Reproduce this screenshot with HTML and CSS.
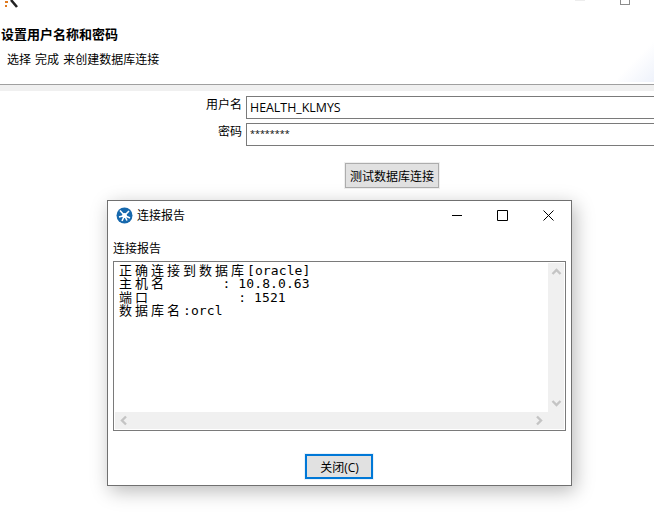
FILE: index.html
```html
<!DOCTYPE html>
<html lang="zh-CN">
<head>
    <meta charset="UTF-8">
    <meta name="viewport" content="width=device-width, initial-scale=1.0">
    <title>设置用户名称和密码</title>
    <link rel="stylesheet" href="styles.css">
</head>
<body>
    <!-- Top of the wizard window, cut off by the screenshot -->
    <svg class="tool-icon" width="20" height="10" viewBox="0 0 20 10">
        <path d="M11 0l6 7" stroke="#222" stroke-width="2.6" fill="none"/>
        <path d="M5 1h3v2H5zM5 5h2v2H5z" fill="#e07a20"/>
    </svg>
    <span class="cut-tab"></span>
    <span class="cut-box"></span>

    <div class="header">
        <div class="header-shade"></div>
        <h1>设置用户名称和密码</h1>
        <p>选择 完成 来创建数据库连接</p>
    </div>
    <div class="rule"></div>

    <div class="form">
        <label for="user">用户名</label>
        <input id="user" type="text" value="HEALTH_KLMYS">
        <label for="pass">密码</label>
        <div id="pass" class="pass-field">********</div>
    </div>

    <div class="test-row">
        <button class="btn">测试数据库连接</button>
    </div>

    <!-- Report dialog -->
    <div class="dialog">
        <div class="titlebar">
            <svg class="app-icon" width="17" height="17" viewBox="0 0 17 17">
                <circle cx="8.5" cy="8.5" r="8" fill="#1668ad"/>
                <path d="M8.5 8.5L4 3.500M8.500 8.500L13 4M8.500 8.500L3 10M8.500 8.500L14 11M8.500 8.500L6 14M8.500 8.500L11 13.500" stroke="#fff" stroke-width="1.6"/>
                <circle cx="8.5" cy="8.5" r="2.4" fill="#fff"/>
            </svg>
            <span class="title">连接报告</span>
            <svg class="win-btn" width="10" height="10" viewBox="0 0 10 10"><path d="M0 5.500h10" stroke="#000"/></svg>
            <svg class="win-btn" width="11" height="11" viewBox="0 0 11 11"><path d="M.5.5h10v10H.5z" stroke="#000" fill="none"/></svg>
            <svg class="win-btn" width="11" height="11" viewBox="0 0 11 11"><path d="M.5.5l10 10M10.500.5l-10 10" stroke="#000" fill="none"/></svg>
        </div>
        <div class="dialog-body">
            <div class="report-label">连接报告</div>
            <div class="report-box">
                <div class="report-text">
                    <div class="report-line"><span class="han">正确连接到数据库</span>[oracle]</div>
                    <div class="report-line"><span class="han">主机名</span>       : 10.8.0.63</div>
                    <div class="report-line"><span class="han">端口</span>           : 1521</div>
                    <div class="report-line"><span class="han">数据库名</span>:orcl</div>
                </div>
                <div class="vbar">
                    <svg width="11" height="8" viewBox="0 0 11 8"><path d="M1.500 6L5.500 2l4 4" stroke="#c4c4c4" stroke-width="2.400" fill="none"/></svg>
                    <svg width="11" height="8" viewBox="0 0 11 8"><path d="M1.500 2l4 4 4-4" stroke="#c4c4c4" stroke-width="2.400" fill="none"/></svg>
                </div>
                <div class="hbar">
                    <svg width="8" height="11" viewBox="0 0 8 11"><path d="M6 1.500l-4 4 4 4" stroke="#c4c4c4" stroke-width="2.400" fill="none"/></svg>
                    <svg width="8" height="11" viewBox="0 0 8 11"><path d="M2 1.500l4 4-4 4" stroke="#c4c4c4" stroke-width="2.400" fill="none"/></svg>
                </div>
                <div class="corner"></div>
            </div>
            <div class="dialog-foot">
                <button class="btn btn-close">关闭(C)</button>
            </div>
        </div>
    </div>
</body>
</html>
```

FILE: styles.css
```css
body {
    font-family: "Open Sans", "Noto Sans CJK SC", sans-serif;
    font-size: 12px;
    color: #000;
    background-color: #fff;
    margin: 0;
    height: 514px;
    overflow: hidden;
    position: relative;
}

.tool-icon {
    position: absolute;
    left: 0;
    top: 0;
}

.cut-tab {
    position: absolute;
    left: 575px;
    top: 0;
    width: 10px;
    height: 1px;
    background-color: #ededed;
}

.cut-box {
    position: absolute;
    left: 620px;
    top: -6px;
    width: 8px;
    height: 9px;
    border: 1px solid #8c8c8c;
}

.header {
    height: 84px;
    position: relative;
    overflow: hidden;
}

.header-shade {
    position: absolute;
    right: 0;
    bottom: 2px;
    width: 36px;
    height: 44px;
    background: linear-gradient(135deg, #fff 48%, #eef2fb 100%);
}

h1 {
    margin: 0;
    padding: 26px 0 0 1px;
    font-size: 13px;
    line-height: 16px;
    font-weight: bold;
    font-family: "Noto Sans CJK SC", sans-serif;
}

.header p {
    margin: 0;
    padding: 10px 0 0 7px;
    line-height: 16px;
    word-spacing: 1px;
}

.rule {
    height: 6px;
    background-color: #f0f0f0;
    border-top: 1px solid #a0a0a0;
}

.form {
    display: grid;
    grid-template-columns: 242px 1fr;
    grid-template-rows: 23px 23px;
    row-gap: 4px;
    column-gap: 4px;
    margin: 5px -4px 0 0;
}

.form label {
    text-align: right;
    line-height: 18px;
}

#user {
    box-sizing: border-box;
    width: 100%;
    height: 23px;
    border: 1px solid #7a7a7a;
    padding: 0 3px;
    margin: 0;
    font: inherit;
    font-size: 12.4px;
    color: #000;
    outline: none;
}

.pass-field {
    box-sizing: border-box;
    height: 23px;
    border: 1px solid #7a7a7a;
    padding: 0 3px;
    font-size: 9px;
    line-height: 19px;
}

.test-row {
    padding: 17px 0 0 345px;
}

.btn {
    font: inherit;
    color: #000;
    background-color: #e1e1e1;
    border: 1px solid #adadad;
    outline: 1px solid #efefef;
    padding: 0;
    width: 94px;
    height: 25px;
    box-sizing: border-box;
}

.dialog {
    position: absolute;
    left: 107px;
    top: 200px;
    width: 463px;
    height: 284px;
    border: 1px solid #707070;
    background-color: #fff;
    box-shadow: 3px 5px 18px rgba(0, 0, 0, 0.28);
    display: flex;
    flex-direction: column;
}

.titlebar {
    display: flex;
    align-items: center;
    height: 30px;
    padding: 0 17px 0 8px;
}

.app-icon {
    margin: 0 4px 2px 0;
}

.title {
    flex: 1;
    line-height: 30px;
}

.win-btn {
    margin: 0 0 2px 35px;
}

.dialog-body {
    flex: 1;
    padding: 0 5px;
    display: flex;
    flex-direction: column;
}

.report-label {
    line-height: 16px;
    padding-top: 10px;
    margin-bottom: 4px;
}

.report-box {
    box-sizing: border-box;
    height: 170px;
    border: 1px solid #7a7a7a;
    padding: 1px;
    display: grid;
    grid-template-columns: 1fr 16px;
    grid-template-rows: 1fr 17px;
}

.report-text {
    padding: 0 0 0 4px;
    font-family: "DejaVu Sans Mono", "Noto Sans CJK SC", monospace;
    font-size: 13px;
    letter-spacing: 0.1px;
}

.report-line {
    height: 13.33px;
    line-height: 13.33px;
    white-space: pre;
}

.han {
    font-family: "Noto Sans CJK SC", sans-serif;
    letter-spacing: 3px;
}

.vbar {
    background-color: #f0f0f0;
    display: flex;
    flex-direction: column;
    justify-content: space-between;
    align-items: center;
    padding: 5px 0;
}

.hbar {
    background-color: #f0f0f0;
    display: flex;
    justify-content: space-between;
    align-items: center;
    padding: 0 5px;
}

.corner {
    background-color: #f0f0f0;
}

.dialog-foot {
    display: flex;
    justify-content: center;
    padding: 23px 2px 0 0;
}

.btn-close {
    width: 68px;
    height: 25px;
    padding-left: 2px;
    border: 2px solid #0078d7;
    outline: 1px solid #e8f2fb;
}
```
